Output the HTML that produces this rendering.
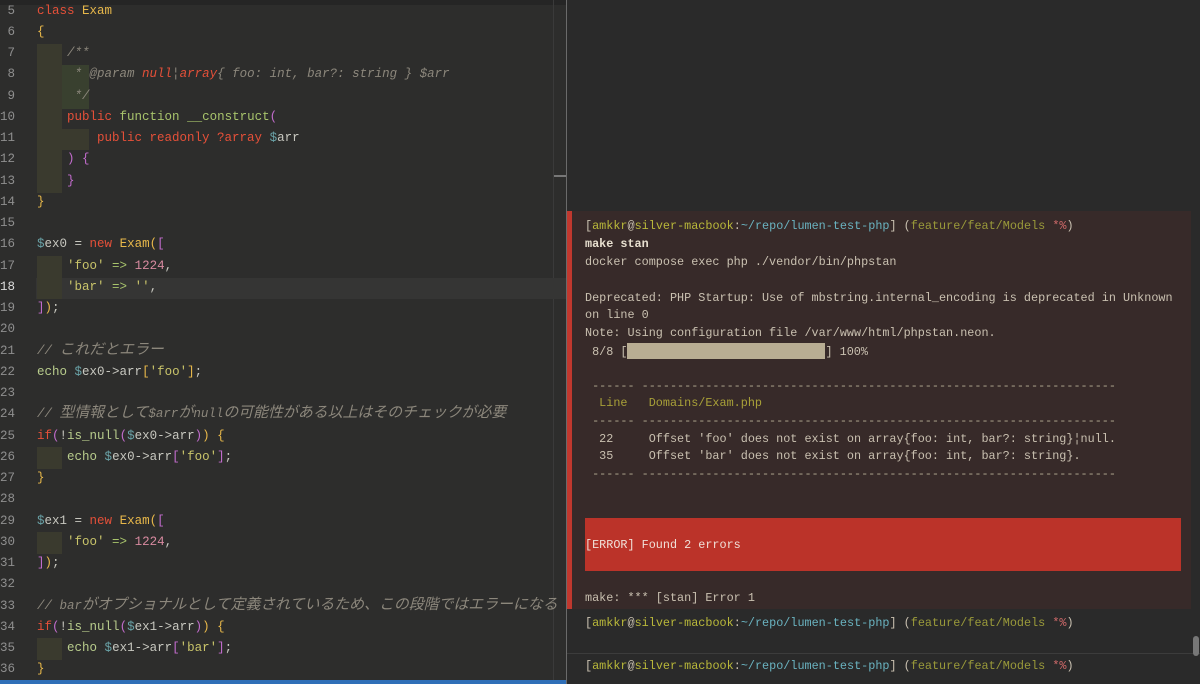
<!DOCTYPE html>
<html><head><meta charset="utf-8"><style>
*{margin:0;padding:0;box-sizing:border-box}
body{width:1200px;height:684px;overflow:hidden;background:#2b2b2b;position:relative;font-family:"Liberation Mono","Noto Sans CJK JP",monospace}
#ed{position:absolute;left:0;top:0;width:566px;height:684px;background:#2d2d2c}
#top{position:absolute;left:0;top:0;width:566px;height:5px;background:#252525}
.ln{position:absolute;left:0;width:15px;text-align:right;color:#8f8f8f;font-size:12.5px;line-height:21px;height:21px}
.cl{position:absolute;left:37px;white-space:pre;font-size:12.5px;color:#c8c8c0;line-height:21px;height:21px}
.j{font-size:14.9px;line-height:0}
.g{position:absolute;background:#3a3a2e}
.k{color:#e55039}.f{color:#a8c46c}.y{color:#e8b84a}.p{color:#c26ccd}.s{color:#c9c46a}.n{color:#d88aa0}.v{color:#6aa3a8}.c{color:#8c877c;font-style:italic}.e{color:#b8cc8c}
#term{position:absolute;left:566px;top:0;width:634px;height:684px;background:#2a2a2a;border-left:1px solid #6a6a6a}
#blk{position:absolute;left:0;top:211px;width:624px;height:398px;background:#372a29;border-left:5px solid #c0382e}
.t{position:absolute;left:13px;white-space:pre;font-size:11.8px;color:#c9c0b0}
.o{color:#b9b83a}.b{color:#6ab3c0}.r{color:#d06a6a}.h{color:#9a9a3a}
</style></head><body>
<div id="ed">
<div id="top"></div>
<div style="position:absolute;left:553px;top:0;width:1px;height:680px;background:#3a3a3a"></div>
<div style="position:absolute;left:554px;top:175px;width:12px;height:2px;background:#777"></div>
<div style="position:absolute;left:36px;top:278px;width:530px;height:21px;background:#353534"></div>
<div class="g" style="left:37px;top:44px;width:25px;height:149px"></div>
<div class="g" style="left:62px;top:65px;width:27px;height:44px;background:#39402f"></div>
<div class="g" style="left:62px;top:129px;width:27px;height:21px"></div>
<div class="g" style="left:37px;top:256px;width:25px;height:43px"></div>
<div class="g" style="left:37px;top:447px;width:25px;height:22px"></div>
<div class="g" style="left:37px;top:532px;width:25px;height:22px"></div>
<div class="g" style="left:37px;top:638px;width:25px;height:22px"></div>
<div style="position:absolute;left:0;top:680px;width:566px;height:4px;background:#2f6fb8"></div>
</div>
<div id="term">
<div id="blk">
<div class="t" style="top:8px">[<span class="o">amkkr</span>@<span class="o">silver-macbook</span>:<span class="b">~/repo/lumen-test-php</span>] (<span class="h">feature/feat/Models</span> <span class="r">*%</span>)</div>
<div class="t" style="top:26px;color:#e8e0d0;font-weight:bold">make stan</div>
<div class="t" style="top:44px">docker compose exec php ./vendor/bin/phpstan</div>
<div class="t" style="top:80px">Deprecated: PHP Startup: Use of mbstring.internal_encoding is deprecated in Unknown</div>
<div class="t" style="top:97px">on line 0</div>
<div class="t" style="top:115px">Note: Using configuration file /var/www/html/phpstan.neon.</div>
<div class="t" style="top:132px"> 8/8 [<span style="display:inline-block;width:198px;height:16px;background:#b8ad93;vertical-align:-4px"></span>] 100%</div>
<div class="t" style="top:168px;color:#b0a890"> ------ -------------------------------------------------------------------</div>
<div class="t" style="top:185px;color:#a8a038">  Line   Domains/Exam.php</div>
<div class="t" style="top:203px;color:#b0a890"> ------ -------------------------------------------------------------------</div>
<div class="t" style="top:221px">  22     Offset 'foo' does not exist on array{foo: int, bar?: string}¦null.</div>
<div class="t" style="top:238px">  35     Offset 'bar' does not exist on array{foo: int, bar?: string}.</div>
<div class="t" style="top:256px;color:#b0a890"> ------ -------------------------------------------------------------------</div>
<div style="position:absolute;left:13px;top:307px;width:596px;height:53px;background:#bb3329"></div>
<div class="t" style="top:327px;color:#f0e0d8">[ERROR] Found 2 errors</div>
<div class="t" style="top:380px">make: *** [stan] Error 1</div>
</div>
<div class="t" style="top:616px;left:18px">[<span class="o">amkkr</span>@<span class="o">silver-macbook</span>:<span class="b">~/repo/lumen-test-php</span>] (<span class="h">feature/feat/Models</span> <span class="r">*%</span>)</div>
<div style="position:absolute;left:0;top:653px;width:634px;height:1px;background:#3c3c3c"></div>
<div class="t" style="top:659px;left:18px">[<span class="o">amkkr</span>@<span class="o">silver-macbook</span>:<span class="b">~/repo/lumen-test-php</span>] (<span class="h">feature/feat/Models</span> <span class="r">*%</span>)</div>
<div style="position:absolute;left:626px;top:636px;width:6px;height:20px;border-radius:3px;background:#777"></div>
</div>
<div style="position:absolute;left:0;top:-3px">
<div class="ln" style="top:4px">5</div><div class="cl" style="top:4px"><span class="k">class</span> <span class="y">Exam</span></div>
<div class="ln" style="top:25px">6</div><div class="cl" style="top:25px"><span class="y">{</span></div>
<div class="ln" style="top:46px">7</div><div class="cl c" style="top:46px">    /**</div>
<div class="ln" style="top:67px">8</div><div class="cl c" style="top:67px">     * @param <span class="k">null</span>¦<span class="k">array</span>{ foo: int, bar?: string } $arr</div>
<div class="ln" style="top:89px">9</div><div class="cl c" style="top:89px">     */</div>
<div class="ln" style="top:110px">10</div><div class="cl" style="top:110px">    <span class="k">public</span> <span class="f">function</span> <span class="f">__construct</span><span class="p">(</span></div>
<div class="ln" style="top:131px">11</div><div class="cl" style="top:131px">        <span class="k">public readonly ?array</span> <span class="v">$</span>arr</div>
<div class="ln" style="top:152px">12</div><div class="cl" style="top:152px">    <span class="p">) {</span></div>
<div class="ln" style="top:174px">13</div><div class="cl" style="top:174px">    <span class="p">}</span></div>
<div class="ln" style="top:195px">14</div><div class="cl" style="top:195px"><span class="y">}</span></div>
<div class="ln" style="top:216px">15</div>
<div class="ln" style="top:237px">16</div><div class="cl" style="top:237px"><span class="v">$</span>ex0 = <span class="k">new</span> <span class="y">Exam(</span><span class="p">[</span></div>
<div class="ln" style="top:259px">17</div><div class="cl" style="top:259px">    <span class="s">'foo'</span> <span class="f">=&gt;</span> <span class="n">1224</span>,</div>
<div class="ln" style="top:280px;color:#ddd">18</div><div class="cl" style="top:280px">    <span class="s">'bar'</span> <span class="f">=&gt;</span> <span class="s">''</span>,</div>
<div class="ln" style="top:301px">19</div><div class="cl" style="top:301px"><span class="p">]</span><span class="y">)</span>;</div>
<div class="ln" style="top:322px">20</div>
<div class="ln" style="top:344px">21</div><div class="cl c" style="top:344px">// <span class="j">これだとエラー</span></div>
<div class="ln" style="top:365px">22</div><div class="cl" style="top:365px"><span class="e">echo</span> <span class="v">$</span>ex0-&gt;arr<span class="y">[</span><span class="s">'foo'</span><span class="y">]</span>;</div>
<div class="ln" style="top:386px">23</div>
<div class="ln" style="top:407px">24</div><div class="cl c" style="top:407px">// <span class="j">型情報として</span>$arr<span class="j">が</span>null<span class="j">の可能性がある以上はそのチェックが必要</span></div>
<div class="ln" style="top:429px">25</div><div class="cl" style="top:429px"><span class="k">if</span><span class="p">(</span>!<span class="e">is_null</span><span class="p">(</span><span class="v">$</span>ex0-&gt;arr<span class="p">)</span><span class="y">) {</span></div>
<div class="ln" style="top:450px">26</div><div class="cl" style="top:450px">    <span class="e">echo</span> <span class="v">$</span>ex0-&gt;arr<span class="p">[</span><span class="s">'foo'</span><span class="p">]</span>;</div>
<div class="ln" style="top:471px">27</div><div class="cl" style="top:471px"><span class="y">}</span></div>
<div class="ln" style="top:492px">28</div>
<div class="ln" style="top:514px">29</div><div class="cl" style="top:514px"><span class="v">$</span>ex1 = <span class="k">new</span> <span class="y">Exam(</span><span class="p">[</span></div>
<div class="ln" style="top:535px">30</div><div class="cl" style="top:535px">    <span class="s">'foo'</span> <span class="f">=&gt;</span> <span class="n">1224</span>,</div>
<div class="ln" style="top:556px">31</div><div class="cl" style="top:556px"><span class="p">]</span><span class="y">)</span>;</div>
<div class="ln" style="top:577px">32</div>
<div class="ln" style="top:599px">33</div><div class="cl c" style="top:599px">// bar<span class="j">がオプショナルとして定義されているため、この段階ではエラーになる</span></div>
<div class="ln" style="top:620px">34</div><div class="cl" style="top:620px"><span class="k">if</span><span class="p">(</span>!<span class="e">is_null</span><span class="p">(</span><span class="v">$</span>ex1-&gt;arr<span class="p">)</span><span class="y">) {</span></div>
<div class="ln" style="top:641px">35</div><div class="cl" style="top:641px">    <span class="e">echo</span> <span class="v">$</span>ex1-&gt;arr<span class="p">[</span><span class="s">'bar'</span><span class="p">]</span>;</div>
<div class="ln" style="top:662px">36</div><div class="cl" style="top:662px"><span class="y">}</span></div>
</div>
</body></html>
